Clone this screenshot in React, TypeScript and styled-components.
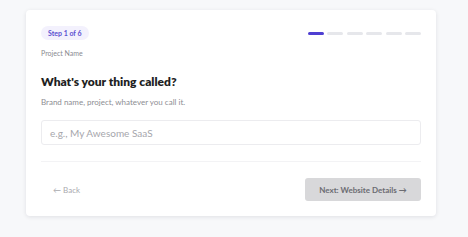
import React from 'react';
import styled, { createGlobalStyle } from 'styled-components';

const GlobalStyle = createGlobalStyle`
  html, body {
    margin: 0;
    padding: 0;
    background: #f7f8fa;
    font-family: "Lato", "Liberation Sans", sans-serif;
  }
`;

const Page = styled.div`
  width: 468px;
  height: 237px;
  padding: 10px 32px 0 26px;
  box-sizing: border-box;
`;

const Card = styled.div`
  width: 410px;
  height: 206px;
  box-sizing: border-box;
  background: #fff;
  border-radius: 4px;
  box-shadow: 0 1px 4px rgba(20, 20, 40, 0.1);
  padding: 16px 15px 15px;
  display: flex;
  flex-direction: column;
`;

const Header = styled.div`
  display: flex;
  align-items: center;
  justify-content: space-between;
  height: 14px;
`;

const StepPill = styled.span`
  display: inline-flex;
  align-items: center;
  height: 14px;
  padding: 0 7px;
  border-radius: 7px;
  background: #f3f1fd;
  color: #5b4fd0;
  font-size: 7px;
  font-weight: 700;
`;

const Dashes = styled.div`
  display: flex;
  gap: 3.5px;
`;

const Dash = styled.span<{ active?: boolean }>`
  width: 16px;
  height: 3px;
  border-radius: 2px;
  background: ${p => (p.active ? '#4f3fd2' : '#e6e7eb')};
`;

const Label = styled.div`
  margin-top: 9px;
  font-size: 7px;
  color: #8a8a90;
`;

const Title = styled.h1`
  margin: 17px 0 0;
  font-size: 12px;
  font-weight: 800;
  color: #1f1f24;
`;

const Sub = styled.p`
  margin: 8px 0 0;
  font-size: 8px;
  color: #8d8d93;
`;

const Input = styled.div`
  margin-top: 13px;
  height: 25px;
  box-sizing: border-box;
  border: 1px solid #ececef;
  border-radius: 3px;
  padding: 0 8px;
  display: flex;
  align-items: center;
  font-size: 10px;
  color: #a6a6ac;
`;

const Divider = styled.div`
  margin-top: 16px;
  height: 1px;
  background: #f3f3f5;
`;

const Footer = styled.div`
  margin-top: 16px;
  display: flex;
  align-items: center;
  justify-content: space-between;
`;

const BackButton = styled.span`
  padding-left: 12px;
  font-size: 8px;
  color: #a9a9ae;
`;

const NextButton = styled.span`
  width: 116px;
  height: 23px;
  display: flex;
  align-items: center;
  justify-content: center;
  background: #d8d8da;
  border-radius: 3px;
  font-size: 8px;
  font-weight: 700;
  color: #6c6c72;
`;

export default function App() {
  return (
    <>
      <GlobalStyle />
      <Page>
        <Card>
          <Header>
            <StepPill>Step 1 of 6</StepPill>
            <Dashes>
              {[0, 1, 2, 3, 4, 5].map(i => (
                <Dash key={i} active={i === 0} />
              ))}
            </Dashes>
          </Header>
          <Label>Project Name</Label>
          <Title>What's your thing called?</Title>
          <Sub>Brand name, project, whatever you call it.</Sub>
          <Input>e.g., My Awesome SaaS</Input>
          <Divider />
          <Footer>
            <BackButton>← Back</BackButton>
            <NextButton>Next: Website Details →</NextButton>
          </Footer>
        </Card>
      </Page>
    </>
  );
}
